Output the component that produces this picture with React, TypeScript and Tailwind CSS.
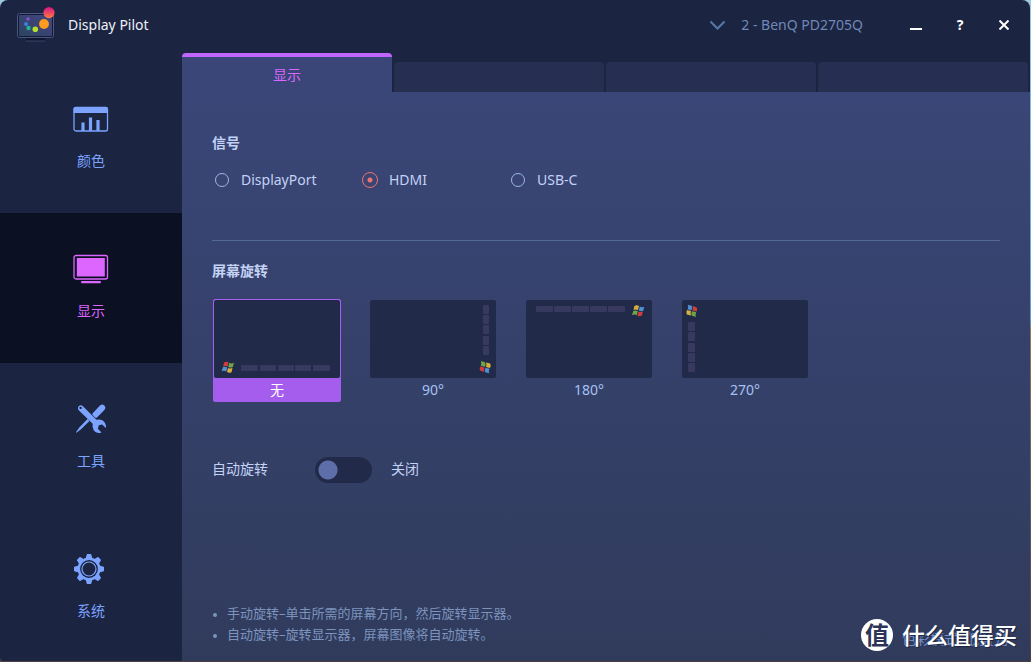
import { useState } from "react";

const FONT = "font-['Noto_Sans','Noto_Sans_CJK_SC',sans-serif]";

type Spot = { x: number; y: number; w: number; h: number };

const ROTATIONS: { id: string; label: string; logo: [number, number, number]; bars: Spot[] }[] = [
  {
    id: "0",
    label: "无",
    logo: [8, 61, 0],
    bars: [27, 46, 64, 81, 99].map((x) => ({ x, y: 65, w: x === 27 || x === 99 ? 17 : 16, h: 6 })),
  },
  {
    id: "90",
    label: "90°",
    logo: [109, 61, -90],
    bars: [5, 15, 25, 36, 46].map((y) => ({ x: 113, y, w: 6, h: 9 })),
  },
  {
    id: "180",
    label: "180°",
    logo: [106, 5, 180],
    bars: [10, 28, 46, 64, 82].map((x) => ({ x, y: 6, w: 17, h: 6 })),
  },
  {
    id: "270",
    label: "270°",
    logo: [4, 5, 90],
    bars: [22, 32, 43, 53, 63].map((y) => ({ x: 6, y, w: 7, h: 9 })),
  },
];

function AppLogo() {
  return (
    <svg width="38" height="36" viewBox="0 0 38 36" aria-hidden="true">
      <defs>
        <linearGradient id="screen" x1="0" y1="1" x2="1" y2="0">
          <stop offset="0" stopColor="#2c4360" />
          <stop offset="1" stopColor="#454582" />
        </linearGradient>
        <linearGradient id="ball" x1="0" y1="0" x2="0" y2="1">
          <stop offset="0" stopColor="#d9138a" />
          <stop offset="1" stopColor="#ff7a3c" />
        </linearGradient>
      </defs>
      <rect x="9" y="30" width="19" height="4" rx="1" fill="#0f1630" />
      <path d="M9 34h19" stroke="#3b4668" />
      <rect x="0.5" y="6.5" width="36" height="24" rx="2" fill="#141a35" stroke="#4a5580" />
      <rect x="2" y="8" width="33" height="21" fill="url(#screen)" />
      <circle cx="11" cy="12" r="1.7" fill="#8a52d0" />
      <circle cx="9" cy="17" r="2" fill="#3f7fe0" />
      <circle cx="11.5" cy="21" r="2.2" fill="#1db893" />
      <circle cx="18.3" cy="22.300" r="2.8" fill="#b8dc30" />
      <circle cx="27" cy="17" r="4.9" fill="#ff9c20" />
      <circle cx="32" cy="5.6" r="5.6" fill="url(#ball)" />
    </svg>
  );
}

function ColorIcon() {
  return (
    <svg width="36" height="32" viewBox="0 -1 36 32" aria-hidden="true">
      <rect x="1" y="3.5" width="33.5" height="23.5" rx="2" fill="none" stroke="currentColor" strokeWidth="1.3" />
      <path d="M0.5 9V5a2 2 0 0 1 2-2h30.5a2 2 0 0 1 2 2V9z" fill="currentColor" />
      <path d="M10 27v-8.500M17.500 27V13.500M25 27V16" stroke="currentColor" strokeWidth="3.2" />
    </svg>
  );
}

function ScreenIcon() {
  return (
    <svg width="36" height="32" viewBox="0 -1 36 32" aria-hidden="true">
      <rect x="1" y="1.5" width="33.5" height="23.5" rx="2" fill="none" stroke="currentColor" strokeWidth="1.3" />
      <rect x="3.8" y="4" width="28" height="18.5" fill="currentColor" />
      <rect x="8" y="27" width="20" height="2.3" rx="1.1" fill="currentColor" />
    </svg>
  );
}

function ToolsIcon() {
  return (
    <svg width="36" height="32" viewBox="0 0 36 32" aria-hidden="true">
      <path
        d="M19.500 10.500 27 2.500q2.300-2 4.300 0t0.300 4.200L24 14.500q-1.200 0.700-2.200-0.300l-2-2q-0.900-0.900-0.300-1.700z"
        fill="currentColor"
      />
      <path d="m14.500 16 2 2-8.500 8.300-4.500 3.500-0.500-0.500 3-4.500z" fill="currentColor" />
      <path
        fillRule="evenodd"
        d="M5 4.800A2.900 2.900 0 0 1 9.700 3L23.500 16.800Q29.500 15.800 32 20Q33.400 22.500 32.800 25L29.200 21.500 25.800 22.300 24.900 25.800 28.500 29.500Q23.500 31.200 20.800 27.600Q18.900 24.600 19.700 20.800L5.700 7.300A2.900 2.900 0 0 1 5 4.800zM7.600 3.700a1.200 1.200 0 1 0 0.010 0z"
        fill="currentColor"
      />
    </svg>
  );
}

function GearIcon() {
  return (
    <svg width="36" height="32" viewBox="0 0 36 32" aria-hidden="true">
      <g fill="currentColor">
        <circle cx="16" cy="16" r="11.5" />
        {[0, 45, 90, 135, 180, 225, 270, 315].map((a) => (
          <path
            key={a}
            d="M12.300 6.500 13.800 1.300Q14 1 14.500 1h3q0.500 0 0.700 0.300L19.700 6.500z"
            transform={`rotate(${a} 16 16)`}
          />
        ))}
      </g>
      <circle cx="16" cy="16" r="8.9" fill="#1b2440" />
      <circle cx="16" cy="16" r="7" fill="none" stroke="currentColor" strokeWidth="1.2" />
    </svg>
  );
}

const NAV = [
  { label: "颜色", icon: ColorIcon },
  { label: "显示", icon: ScreenIcon },
  { label: "工具", icon: ToolsIcon },
  { label: "系统", icon: GearIcon },
];

function Preview({ logo, bars }: { logo: [number, number, number]; bars: Spot[] }) {
  const [lx, ly, turn] = logo;
  return (
    <svg width="126" height="78" viewBox="0 0 126 78" className="block" aria-hidden="true">
      <rect width="126" height="78" rx="2" fill="#212a49" />
      {bars.map((b) => (
        <rect key={`${b.x}-${b.y}`} x={b.x} y={b.y} width={b.w} height={b.h} rx="1" fill="#38395f" />
      ))}
      <g transform={`translate(${lx} ${ly}) rotate(${turn} 6 6)`}>
        <path d="M2.200 1.500Q4.500 0 6.500 1.300L5.500 5.500Q3.200 4.400 1 5.500z" fill="#d23c3c" />
        <path d="M7.300 1.800Q9.500 3 12 1.800L10.800 6Q8.500 7.200 6.200 6z" fill="#6fa544" />
        <path d="M0.800 6.300Q3 5.200 5.200 6.500L4.200 10.500Q2 9.300-0.300 10.200z" fill="#4f92d0" />
        <path d="M6 6.900Q8.300 8 10.500 7L9.500 11.200Q7.200 12.300 5 11z" fill="#d9ae3f" />
      </g>
    </svg>
  );
}

export default function App() {
  const [page, setPage] = useState("显示");
  const [signal, setSignal] = useState("HDMI");
  const [rotation, setRotation] = useState("0");
  const [auto, setAuto] = useState(false);

  return (
    <div
      className={`min-h-screen flex flex-col bg-[linear-gradient(#9cc8e0,#5fa0e0_48%,#8c7a60_50%,#5c5f60_75%,#4a4044)] pr-px pb-px text-sm leading-5 ${FONT}`}
    >
      <div className="flex-1 flex flex-col overflow-hidden rounded-t-lg rounded-b-sm bg-[#1b2440]">
        <header className="flex h-[53px] items-center pb-1 pl-[17px] pr-4">
          <AppLogo />
          <h1 className="ml-[13px] flex-1 text-[#eef0f8]">Display Pilot</h1>
          <button type="button" className="flex items-center gap-4 text-[#7088b8]">
            <svg
              width="15"
              height="10"
              viewBox="0 0 15 10"
              fill="none"
              stroke="#5579a6"
              strokeWidth="2"
              aria-hidden="true"
            >
              <path d="m0.500 1.500 7 7 7-7" />
            </svg>
            2 - BenQ PD2705Q
          </button>
          <div className="ml-[43px] flex items-center gap-6 text-white">
            <button type="button" aria-label="最小化" className="flex size-5 items-center justify-center">
              <svg width="12" height="12" viewBox="0 0 12 12" fill="none" stroke="currentColor" strokeWidth="2">
                <path d="M0 10h12" />
              </svg>
            </button>
            <button type="button" className="size-5 font-bold">
              ?
            </button>
            <button type="button" aria-label="关闭窗口" className="flex size-5 items-center justify-center">
              <svg width="10" height="10" viewBox="0 0 10 10" fill="none" stroke="currentColor" strokeWidth="2">
                <path d="m0.500 0.500 9 9M9.500 0.500l-9 9" />
              </svg>
            </button>
          </div>
        </header>

        <div className="flex flex-1">
          <nav className="flex w-[182px] shrink-0 flex-col pt-[10px]">
            {NAV.map(({ label, icon: Icon }) => (
              <button
                key={label}
                type="button"
                onClick={() => setPage(label)}
                className={`flex h-[150px] flex-col items-center gap-4 pt-10 last:h-[148px] ${
                  page === label ? "bg-[#0b1022] text-[#dc66ff]" : "text-[#7ba3ff]"
                }`}
              >
                <Icon />
                {label}
              </button>
            ))}
          </nav>

          <div className="flex flex-1 flex-col">
            <div role="tablist" className="grid h-[39px] grid-cols-4 items-end gap-0.5 pr-0.5">
              <button
                type="button"
                role="tab"
                aria-selected="true"
                className="h-full rounded-t-sm border-t-4 border-[#c066ff] bg-[#3a4677] text-[#dc66ff]"
              >
                显示
              </button>
              {[2, 3, 4].map((n) => (
                <div key={n} className="h-[30px] rounded-t-sm bg-[#262f52]" />
              ))}
            </div>

            <main className="flex flex-1 flex-col bg-linear-to-b from-[#3a4677] to-[#303b5c] px-[30px] pt-[41px] text-[#c3d2f5]">
              <fieldset>
                <legend className="font-bold">信号</legend>
                <div className="mt-[17px] flex">
                  {["DisplayPort", "HDMI", "USB-C"].map((name) => (
                    <label key={name} className="flex w-[148px] items-center gap-3 pl-[3px]">
                      <input
                        type="radio"
                        name="signal"
                        checked={signal === name}
                        onChange={() => setSignal(name)}
                        className="size-[14px] appearance-none rounded-full border border-[#9db8ec] checked:-m-px checked:size-4 checked:border-[#f07272] checked:bg-[radial-gradient(circle,#f07272_2px,transparent_3px)]"
                      />
                      {name}
                    </label>
                  ))}
                </div>
              </fieldset>

              <hr className="mt-[50px] border-[#526a94]" />

              <fieldset className="mt-5">
                <legend className="font-bold">屏幕旋转</legend>
                <div className="mt-[18px] flex gap-7 pl-px">
                  {ROTATIONS.map((r) => (
                    <label
                      key={r.id}
                      className={`flex h-[103px] flex-col items-center gap-0.5 rounded-xs border ${
                        rotation === r.id
                          ? "border-[#a45dec] bg-[#a45dec] text-white"
                          : "border-transparent text-[#a5c2f2]"
                      }`}
                    >
                      <input
                        type="radio"
                        name="rotation"
                        checked={rotation === r.id}
                        onChange={() => setRotation(r.id)}
                        className="sr-only"
                      />
                      <Preview logo={r.logo} bars={r.bars} />
                      {r.label}
                    </label>
                  ))}
                </div>
              </fieldset>

              <div className="mt-[55px] flex items-center">
                <label htmlFor="auto" className="w-[103px] pb-0.5">
                  自动旋转
                </label>
                <input
                  id="auto"
                  type="checkbox"
                  role="switch"
                  checked={auto}
                  onChange={(e) => setAuto(e.target.checked)}
                  className="h-[26px] w-[57px] appearance-none rounded-full bg-[#212a49] bg-[radial-gradient(circle_at_13px_13px,#5d6ea9_9px,transparent_10px)] checked:bg-[radial-gradient(circle_at_44px_13px,#5d6ea9_9px,transparent_10px)]"
                />
                <span className="ml-[19px] pb-0.5">{auto ? "开启" : "关闭"}</span>
              </div>

              <footer className="mt-auto flex items-end justify-between pb-3 text-[#7b93bd]">
                <ul className="mb-1 list-disc pl-[15px] text-[13px] leading-[21px] marker:text-[10px]">
                  <li>手动旋转–单击所需的屏幕方向，然后旋转显示器。</li>
                  <li>自动旋转–旋转显示器，屏幕图像将自动旋转。</li>
                </ul>
                <div className="relative -mr-[20px] w-[159px]">
                  <p className="pl-[41px] text-[#7191d0]">色彩模式: 低蓝光</p>
                  <div className="absolute inset-x-0 -top-[10px] flex items-center gap-[9px] whitespace-nowrap text-white">
                    <span className="flex size-8 shrink-0 items-center justify-center rounded-full bg-white text-2xl font-bold leading-8 text-[#2c3557]">
                      值
                    </span>
                    <span className="text-[23px] font-medium leading-8 [text-shadow:1px_1px_1px_#1b2440]">
                      什么值得买
                    </span>
                  </div>
                </div>
              </footer>
            </main>
          </div>
        </div>
      </div>
    </div>
  );
}
